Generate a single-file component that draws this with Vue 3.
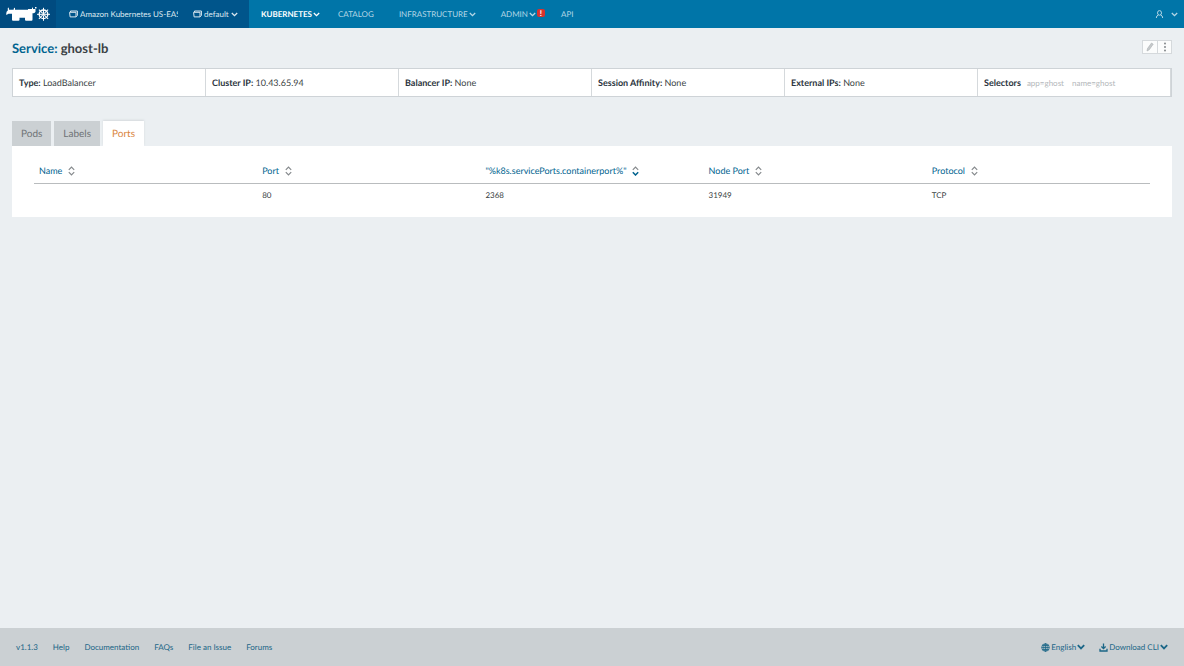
<script setup>
const details = [
  { label: 'Type:', value: 'LoadBalancer' },
  { label: 'Cluster IP:', value: '10.43.65.94' },
  { label: 'Balancer IP:', value: 'None' },
  { label: 'Session Affinity:', value: 'None' },
  { label: 'External IPs:', value: 'None' },
]
const selectors = ['app=ghost', 'name=ghost']
const tabs = ['Pods', 'Labels', 'Ports']
const activeTab = 'Ports'
const columns = ['Name', 'Port', '"%k8s.servicePorts.containerport%"', 'Node Port', 'Protocol']
const sortedColumn = 2
const rows = [['', '80', '2368', '31949', 'TCP']]
const footerLinks = ['v1.1.3', 'Help', 'Documentation', 'FAQs', 'File an Issue', 'Forums']
const spokes = [0, 45, 90, 135, 180, 225, 270, 315]
</script>

<template>
  <div class="page">
    <header class="topbar">
      <a class="logo" href="#" aria-label="Home">
        <svg width="46" height="16" viewBox="0 0 46 16" aria-hidden="true">
          <path fill="#fff" d="M1.800 2Q2.200 1.200 2.800 2L3.100 3.800H7.600L8 2Q8.500 1.300 9 2V3.800H22V3H26V1.800Q26.500 1.200 27 1.800V3H29.500V5.800Q29 7.200 27.500 7.200H26.500V13.600Q26.500 14.800 25.500 14.800H20Q19 14.800 19 13.800V11.800H13.500V13.800Q13.500 14.800 12.500 14.800H7Q6 14.800 6 13.800V7.800H2.800Q1.400 7.800 1.200 8.800Q.4 9.200 .2 8Q.2 5.400 1.800 4.600Z" />
          <g fill="none" stroke="#fff" transform="translate(37.500 8.300)">
            <circle r="4.300" stroke-width="1.300" />
            <path v-for="a in spokes" :key="a" d="M0 -1.200V-6.500" stroke-width="1" :transform="`rotate(${a})`" />
            <circle r="1.200" fill="#fff" stroke="none" />
          </g>
          <path d="M29 1.800H30.500" stroke="#fff" stroke-width="1.500" />
        </svg>
      </a>
      <div class="scope">
        <button class="scope-btn" type="button">
          <svg class="folder" viewBox="0 0 9 8" aria-hidden="true"><path d="M.6 2.300H7V6.900H1.100ZM1.500 2V1H8.400V5.500L7.200 6.800" /></svg>
          <span class="cluster">Amazon Kubernetes US-EAST</span>
        </button>
        <button class="scope-btn" type="button">
          <svg class="folder" viewBox="0 0 9 8" aria-hidden="true"><path d="M.6 2.300H7V6.900H1.100ZM1.500 2V1H8.400V5.500L7.200 6.800" /></svg>
          <span>default</span>
          <svg class="chev" viewBox="0 0 7 5" aria-hidden="true"><path d="M.8 1L3.500 3.700L6.200 1" /></svg>
        </button>
      </div>
      <nav class="nav">
        <a class="current" href="#">KUBERNETES<svg class="chev" viewBox="0 0 7 5" aria-hidden="true"><path d="M.8 1L3.500 3.700L6.200 1" /></svg></a>
        <a href="#">CATALOG</a>
        <a href="#">INFRASTRUCTURE<svg class="chev" viewBox="0 0 7 5" aria-hidden="true"><path d="M.8 1L3.500 3.700L6.200 1" /></svg></a>
        <a class="admin" href="#">ADMIN<svg class="chev" viewBox="0 0 7 5" aria-hidden="true"><path d="M.8 1L3.500 3.700L6.200 1" /></svg><span class="alert">!</span></a>
        <a href="#">API</a>
      </nav>
      <button class="user" type="button" aria-label="Account">
        <svg width="9" height="9" viewBox="0 0 9 9" aria-hidden="true"><ellipse cx="4.500" cy="2.900" rx="2" ry="2.300" /><path d="M3.400 4.900Q1.400 5.600 1.300 8M5.600 4.900Q7.600 5.600 7.700 8" /></svg>
        <svg class="chev" viewBox="0 0 7 5" aria-hidden="true"><path d="M.8 1L3.500 3.700L6.200 1" /></svg>
      </button>
    </header>

    <main class="content">
      <div class="heading">
        <h1><a href="#">Service:</a> ghost-lb</h1>
        <div class="actions">
          <button type="button" aria-label="Edit">
            <svg width="8" height="10" viewBox="0 0 8 10" aria-hidden="true"><path d="M1 9L1.500 6.500L5.500 1L7.200 2.200L3.200 7.800Z" fill="#c6cacc" stroke="#a9adb0" stroke-width=".6" /></svg>
          </button>
          <button type="button" aria-label="More actions">
            <svg width="4" height="10" viewBox="0 0 4 10" aria-hidden="true"><g fill="#777c80"><circle cx="2" cy="1.500" r=".9" /><circle cx="2" cy="5" r=".9" /><circle cx="2" cy="8.500" r=".9" /></g></svg>
          </button>
        </div>
      </div>

      <section class="details">
        <div v-for="d in details" :key="d.label" class="detail"><b>{{ d.label }}</b> {{ d.value }}</div>
        <div class="detail selectors">
          <b>Selectors</b>
          <span v-for="s in selectors" :key="s" class="tag">{{ s }}</span>
        </div>
      </section>

      <div class="tabs" role="tablist">
        <button v-for="t in tabs" :key="t" type="button" role="tab" :aria-selected="t === activeTab" :class="{ active: t === activeTab }">{{ t }}</button>
      </div>
      <section class="panel">
        <table>
          <thead>
            <tr>
              <th v-for="(c, i) in columns" :key="c" scope="col">
                <button type="button">
                  {{ c }}
                  <svg class="sort" :class="{ sorted: i === sortedColumn }" viewBox="0 0 7 10" aria-hidden="true">
                    <path d="M.8 3.800L3.500 1L6.200 3.800" /><path class="down" d="M.8 6.200L3.500 9L6.200 6.200" />
                  </svg>
                </button>
              </th>
            </tr>
          </thead>
          <tbody>
            <tr v-for="(r, i) in rows" :key="i"><td v-for="(v, j) in r" :key="j">{{ v }}</td></tr>
          </tbody>
        </table>
      </section>
    </main>

    <footer class="footer">
      <nav class="links"><a v-for="l in footerLinks" :key="l" href="#">{{ l }}</a></nav>
      <div class="menus">
        <button type="button">
          <svg width="9" height="9" viewBox="0 0 9 9" aria-hidden="true"><g fill="none" stroke="#1b6687" stroke-width=".8"><circle cx="4.500" cy="4.500" r="3.800" /><ellipse cx="4.500" cy="4.500" rx="1.800" ry="3.800" /><path d="M.7 4.500H8.300M1.300 2.500H7.700M1.300 6.500H7.700M4.500 .7V8.300" /></g></svg>
          <span>English</span>
          <svg class="chev big" viewBox="0 0 8 6" aria-hidden="true"><path d="M.8 1.200L4 4.400L7.200 1.200" /></svg>
        </button>
        <button type="button">
          <svg width="9" height="9" viewBox="0 0 9 9" aria-hidden="true"><path d="M4.500 .5V5.500M2.400 3.500L4.500 5.600L6.600 3.500M1 5.800V8H8V5.800" fill="none" stroke="#1b6687" stroke-width="1.300" /></svg>
          <span>Download CLI</span>
          <svg class="chev big" viewBox="0 0 8 6" aria-hidden="true"><path d="M.8 1.200L4 4.400L7.200 1.200" /></svg>
        </button>
      </div>
    </footer>
  </div>
</template>

<style>
body {
  margin: 0;
  background: #ebeff2;
}
</style>

<style scoped>
.page {
  display: flex;
  flex-direction: column;
  min-height: 100vh;
  font-family: Lato, "Liberation Sans", sans-serif;
  font-size: 9px;
  line-height: 14px;
  color: #3a3f44;
  text-rendering: geometricPrecision;
}
a {
  color: inherit;
  text-decoration: none;
}
button {
  margin: 0;
  padding: 0;
  border: 0;
  background: none;
  color: inherit;
  font: inherit;
  text-rendering: inherit;
  cursor: pointer;
}
.topbar {
  display: flex;
  height: 28px;
  background: #0075a8;
  color: #b5d7e6;
  font-size: 8px;
}
.logo {
  display: flex;
  align-items: center;
  width: 50px;
  padding-left: 6px;
  background: #004b80;
}
.scope {
  display: flex;
  width: 180px;
  padding-left: 13px;
  gap: 15px;
  background: #00558b;
  color: #dce8f0;
}
.scope-btn {
  display: flex;
  align-items: center;
  gap: 2px;
}
.cluster {
  width: 98px;
  overflow: hidden;
  white-space: nowrap;
  text-align: left;
}
.folder {
  width: 9px;
  height: 8px;
  fill: none;
  stroke: currentColor;
}
.chev {
  flex: none;
  width: 7px;
  height: 5px;
  fill: none;
  stroke: currentColor;
  stroke-width: 1.3;
}
.chev.big {
  width: 8px;
  height: 6px;
  stroke-width: 1.8;
}
.nav {
  display: flex;
  padding-left: 12px;
}
.nav a {
  display: flex;
  align-items: center;
  gap: 1px;
  margin-right: 25px;
}
.nav .current {
  margin-right: 18px;
  color: #fff;
  font-weight: 700;
}
.nav .admin {
  margin-right: 16px;
}
.alert {
  width: 8px;
  height: 8px;
  margin-bottom: 2px;
  border-radius: 2px;
  background: #d9322e;
  color: #fff;
  font-size: 8px;
  font-weight: 700;
  line-height: 8px;
  text-align: center;
}
.user {
  display: flex;
  align-items: center;
  gap: 7px;
  margin-left: auto;
  padding-right: 6px;
}
.user svg {
  fill: none;
  stroke: currentColor;
}
.content {
  flex: 1;
  padding: 12px 12px 0;
}
.heading {
  display: flex;
  justify-content: space-between;
  height: 28px;
}
h1 {
  margin: 0;
  font-size: 13px;
  font-weight: 700;
  line-height: 16px;
}
h1 a {
  color: #00638f;
}
.actions {
  display: flex;
  height: 12px;
  border: 1px solid #d5d9dc;
  background: #fbfcfc;
}
.actions button {
  display: flex;
  align-items: center;
  justify-content: center;
  width: 14px;
}
.actions button + button {
  border-left: 1px solid #d5d9dc;
}
.details {
  display: grid;
  grid-template-columns: repeat(6, 1fr);
  border: 1px solid #ced3d7;
  background: #fff;
}
.detail {
  padding: 6px;
  border-right: 1px solid #d5d9dc;
  line-height: 15px;
}
.detail b {
  color: #2c3540;
}
.selectors {
  display: flex;
}
.tag {
  padding-top: 1px;
  margin-left: 6px;
  color: #b3b7ba;
  font-size: 8px;
  line-height: 14px;
}
.tag + .tag {
  margin-left: 8px;
}
.tabs {
  display: flex;
  gap: 3px;
  margin-top: 24px;
}
.tabs button {
  height: 25px;
  padding: 0 9px;
  background: #cbd0d3;
  color: #6e7275;
  font-size: 10px;
}
.tabs .active {
  background: #fff;
  color: #d9843b;
  box-shadow: 0 -1px 2px #d5d9dc;
}
.panel {
  position: relative;
  padding: 12px 22px 11px;
  background: #fff;
}
table {
  width: 100%;
  border-collapse: collapse;
  table-layout: fixed;
}
th,
td {
  text-align: left;
  font-weight: 400;
}
th {
  height: 25px;
  padding: 0 5px;
  border-bottom: 1px solid #b9bcbe;
  color: #00638f;
}
th button {
  display: flex;
  align-items: center;
  gap: 6px;
  white-space: nowrap;
}
td {
  height: 22px;
  padding: 0 5px;
  font-size: 8px;
}
.sort {
  width: 7px;
  height: 10px;
  fill: none;
  stroke: #85898c;
  stroke-width: 1.2;
}
.sorted .down {
  stroke: #00638f;
  stroke-width: 1.500;
}
.footer {
  display: flex;
  align-items: center;
  justify-content: space-between;
  height: 38px;
  padding: 0 16px;
  background: #cbd0d3;
  color: #1b6687;
  font-size: 8px;
}
.links {
  display: flex;
  gap: 15px;
}
.menus {
  display: flex;
  gap: 14px;
}
.menus button {
  display: flex;
  align-items: center;
  gap: 1px;
}
</style>
